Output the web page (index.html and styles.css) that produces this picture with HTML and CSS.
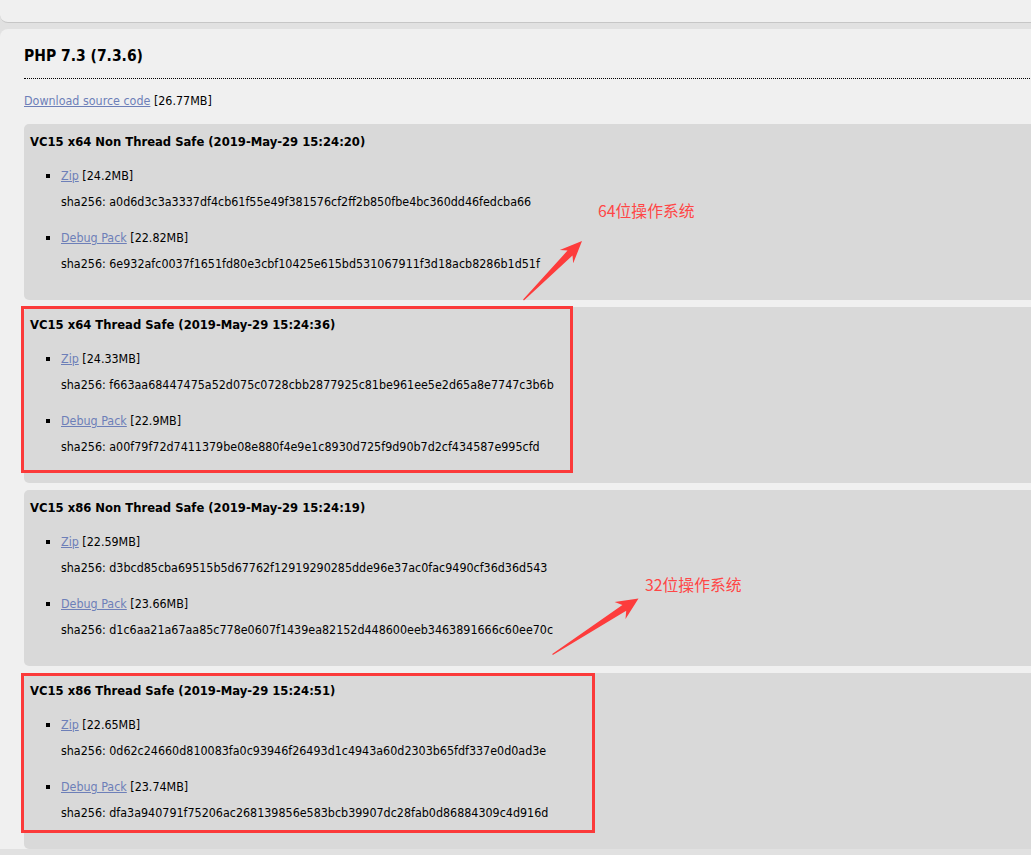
FILE: index.html
```html
<!DOCTYPE html>
<html lang="en">
<head>
    <meta charset="UTF-8">
    <title>PHP For Windows: Binaries and sources Releases</title>
    <link rel="stylesheet" href="styles.css">
</head>
<body>
    <div class="topbox"></div>

    <div class="release">
        <h2>PHP 7.3 (7.3.6)</h2>
        <p class="source"><a href="#">Download source code</a> [26.77MB]</p>

        <div class="build">
            <h4>VC15 x64 Non Thread Safe (2019-May-29 15:24:20)</h4>
            <ul>
                <li>
                    <a href="#">Zip</a> [24.2MB]
                    <span class="sha">sha256: a0d6d3c3a3337df4cb61f55e49f381576cf2ff2b850fbe4bc360dd46fedcba66</span>
                </li>
                <li>
                    <a href="#">Debug Pack</a> [22.82MB]
                    <span class="sha">sha256: 6e932afc0037f1651fd80e3cbf10425e615bd531067911f3d18acb8286b1d51f</span>
                </li>
            </ul>
        </div>

        <div class="build">
            <h4>VC15 x64 Thread Safe (2019-May-29 15:24:36)</h4>
            <ul>
                <li>
                    <a href="#">Zip</a> [24.33MB]
                    <span class="sha">sha256: f663aa68447475a52d075c0728cbb2877925c81be961ee5e2d65a8e7747c3b6b</span>
                </li>
                <li>
                    <a href="#">Debug Pack</a> [22.9MB]
                    <span class="sha">sha256: a00f79f72d7411379be08e880f4e9e1c8930d725f9d90b7d2cf434587e995cfd</span>
                </li>
            </ul>
        </div>

        <div class="build">
            <h4>VC15 x86 Non Thread Safe (2019-May-29 15:24:19)</h4>
            <ul>
                <li>
                    <a href="#">Zip</a> [22.59MB]
                    <span class="sha">sha256: d3bcd85cba69515b5d67762f12919290285dde96e37ac0fac9490cf36d36d543</span>
                </li>
                <li>
                    <a href="#">Debug Pack</a> [23.66MB]
                    <span class="sha">sha256: d1c6aa21a67aa85c778e0607f1439ea82152d448600eeb3463891666c60ee70c</span>
                </li>
            </ul>
        </div>

        <div class="build">
            <h4>VC15 x86 Thread Safe (2019-May-29 15:24:51)</h4>
            <ul>
                <li>
                    <a href="#">Zip</a> [22.65MB]
                    <span class="sha">sha256: 0d62c24660d810083fa0c93946f26493d1c4943a60d2303b65fdf337e0d0ad3e</span>
                </li>
                <li>
                    <a href="#">Debug Pack</a> [23.74MB]
                    <span class="sha">sha256: dfa3a940791f75206ac268139856e583bcb39907dc28fab0d86884309c4d916d</span>
                </li>
            </ul>
        </div>
    </div>

    <!-- screenshot annotations -->
    <svg class="marks" width="1031" height="855" viewBox="0 0 1031 855">
        <rect x="22.5" y="307.5" width="549" height="164" class="frame"/>
        <rect x="22.5" y="674.5" width="571" height="157" class="frame"/>
        <polygon class="arrow" points="523.9,300.4 572.5,255.6 573.2,263.3 582,241 559.8,249.9 567.5,250.6 523.1,299.6"/>
        <polygon class="arrow" points="552.8,655 626.2,610.7 625.5,618.9 638.5,598.5 614.6,602.1 622.4,604.9 552.2,654"/>
    </svg>
    <div class="note note-64">64位操作系统</div>
    <div class="note note-32">32位操作系统</div>
</body>
</html>
```

FILE: styles.css
```css
html, body {
    overflow: hidden;
}

body {
    margin: 0;
    width: 1200px;
    background-color: #e1e1e1;
    font-family: "DejaVu Sans Condensed", "DejaVu Sans", sans-serif;
    font-size: 12.4px;
    color: #000;
}

a {
    color: #6d7fb8;
}

.topbox {
    height: 22px;
    background: #f0f0f0;
    border-bottom: 1px solid #c6c6c6;
    border-radius: 0 0 8px 8px;
}

.release {
    margin-top: 6px;
    padding: 17px 0 0 24px;
    background: #f0f0f0;
    border-radius: 8px 8px 0 0;
}

.release h2 {
    margin: 0;
    font-size: 15.5px;
    line-height: 20px;
    padding-bottom: 12px;
    border-bottom: 1px dotted #000;
}

.source {
    margin: 14px 0 15px;
    line-height: 16px;
}

.build {
    background: #d9d9d9;
    border-radius: 5px;
    padding: 10px 6px 28px;
    margin-bottom: 7px;
}

.build h4 {
    margin: 0;
    font-size: 12.9px;
    line-height: 16px;
}

.build ul {
    margin: 18px 0 0;
    padding-left: 31px;
    list-style: square;
}

.build li {
    line-height: 16px;
    margin-bottom: 20px;
}

.build li:last-child {
    margin-bottom: 0;
}

.sha {
    display: block;
    margin-top: 10px;
}

.marks {
    position: absolute;
    top: 0;
    left: 0;
    pointer-events: none;
}

.frame {
    fill: none;
    stroke: #fb3a3a;
    stroke-width: 3;
}

.arrow {
    fill: #fd3c3c;
}

.note {
    position: absolute;
    color: #ff4646;
    font-family: "Noto Sans CJK SC", sans-serif;
    font-size: 15.8px;
    line-height: 18px;
}

.note-64 {
    left: 598px;
    top: 202px;
}

.note-32 {
    left: 645px;
    top: 576px;
}
```
